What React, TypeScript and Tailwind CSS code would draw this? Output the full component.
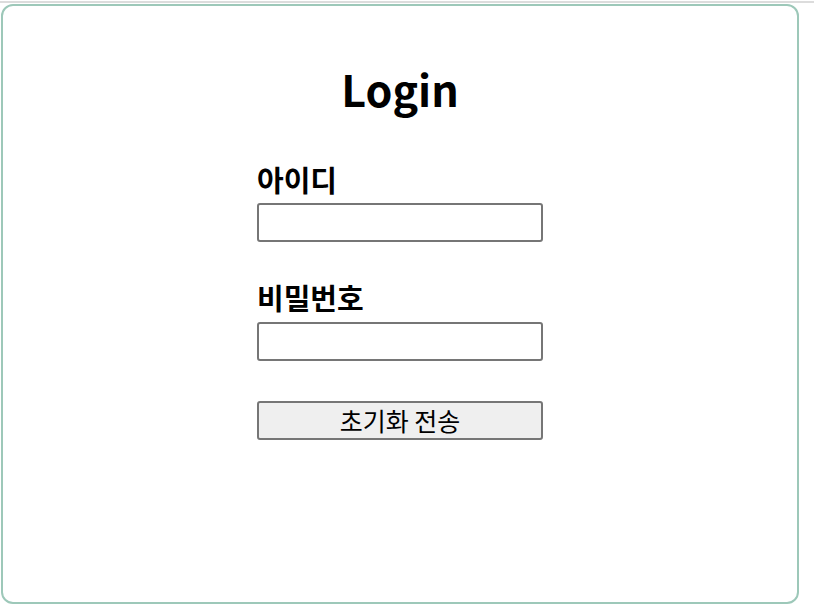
export default function App() {
  return (
    <div className="min-h-[608px] w-[814px] bg-white font-['Noto_Sans_CJK_KR','Noto_Sans',sans-serif] text-black">
      <div className="mt-px h-[2px] w-full bg-[#dcdcdc]" />
      <div className="ml-px mt-px flex h-[600px] w-[798px] flex-col items-center rounded-[12px] border-2 border-[#9dc8b9]">
        <h1 className="mt-[61px] text-[43px] font-bold leading-none">Login</h1>
        <form className="mt-[55px] flex w-[286px] flex-col">
          <label htmlFor="id" className="text-[29px] font-bold leading-none">
            아이디
          </label>
          <input
            id="id"
            type="text"
            className="mt-[9px] h-[39px] rounded-[3px] border-2 border-[#767676] bg-white px-2"
          />
          <label htmlFor="pw" className="mt-[41px] text-[29px] font-bold leading-none">
            비밀번호
          </label>
          <input
            id="pw"
            type="password"
            className="mt-[10px] h-[39px] rounded-[3px] border-2 border-[#767676] bg-white px-2"
          />
          <button
            type="reset"
            className="mt-[40px] h-[39px] rounded-[3px] border-2 border-[#767676] bg-[#efefef] text-[25px] leading-none"
          >
            초기화 전송
          </button>
        </form>
      </div>
    </div>
  );
}
